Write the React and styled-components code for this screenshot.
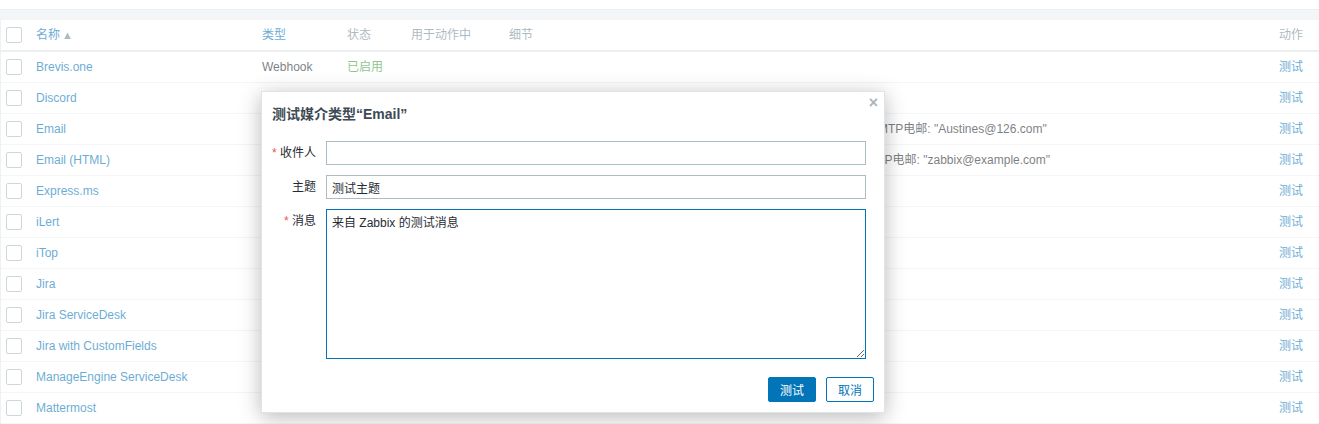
import React from "react";
import styled, { createGlobalStyle } from "styled-components";

const GlobalStyle = createGlobalStyle`
  html, body {
    margin: 0;
    padding: 0;
    background: #ffffff;
  }
  body {
    font-family: "Liberation Sans", Arial, "Noto Sans CJK SC", sans-serif;
    font-size: 12px;
    color: #1f2c33;
    overflow: hidden;
  }
`;

// rows below the dialog only show their name, details and the test link
const mediaTypes = [
  { name: "Brevis.one", type: "Webhook", status: "已启用", details: "" },
  { name: "Discord" },
  {
    name: "Email",
    details:
      'SMTP服务器: "smtp.126.com", SMTP HELO: "zabbix.mx.126.com", SMTP电邮: "Austines@126.com"',
  },
  {
    name: "Email (HTML)",
    details:
      'SMTP服务器: "mail.example.com", SMTP HELO: "example.com", SMTP电邮: "zabbix@example.com"',
  },
  { name: "Express.ms" },
  { name: "iLert" },
  { name: "iTop" },
  { name: "Jira" },
  { name: "Jira ServiceDesk" },
  { name: "Jira with CustomFields" },
  { name: "ManageEngine ServiceDesk" },
  { name: "Mattermost" },
];

function App() {
  return (
    <Page>
      <GlobalStyle />
      <TopBar />
      <Band />
      <Table>
        <HeaderRow>
          <CheckCell>
            <Checkbox />
          </CheckCell>
          <NameCell>
            <SortLink>名称</SortLink>
            <SortArrow>▲</SortArrow>
          </NameCell>
          <TypeCell>
            <HeaderLink>类型</HeaderLink>
          </TypeCell>
          <StatusCell $muted>状态</StatusCell>
          <ActionsUsedCell $muted>用于动作中</ActionsUsedCell>
          <DetailsCell $muted>细节</DetailsCell>
          <ActionCell $muted>动作</ActionCell>
        </HeaderRow>
        {mediaTypes.map((m) => (
          <Row key={m.name}>
            <CheckCell>
              <Checkbox />
            </CheckCell>
            <NameCell>
              <NameLink>{m.name}</NameLink>
            </NameCell>
            <TypeCell>{m.type}</TypeCell>
            <StatusCell>{m.status && <Enabled>{m.status}</Enabled>}</StatusCell>
            <ActionsUsedCell />
            <DetailsCell>{m.details}</DetailsCell>
            <ActionCell>
              <TestLink>测试</TestLink>
            </ActionCell>
          </Row>
        ))}
      </Table>

      <Overlay />

      <Dialog>
        <CloseButton>×</CloseButton>
        <DialogTitle>测试媒介类型“Email”</DialogTitle>
        <Form>
          <Label $required>收件人</Label>
          <TextInput defaultValue="" />
          <Label>主题</Label>
          <TextInput defaultValue="测试主题" />
          <Label $required>消息</Label>
          <TextArea defaultValue="来自 Zabbix 的测试消息" />
        </Form>
        <Footer>
          <Button $primary>测试</Button>
          <Button>取消</Button>
        </Footer>
      </Dialog>
    </Page>
  );
}

const Page = styled.div`
  position: relative;
  width: 1319px;
  height: 424px;
  overflow: hidden;
`;

const TopBar = styled.div`
  height: 9px;
  background: #ffffff;
  border-bottom: 1px solid #dfe4e7;
`;

const Band = styled.div`
  height: 10px;
  background: #ebeef0;
`;

const Table = styled.div`
  background: #ffffff;
  border-left: 1px solid #e3e7ea;
`;

const Row = styled.div`
  display: grid;
  grid-template-columns: 35px 226px 85px 64px 98px 1fr 80px;
  align-items: center;
  height: 30px;
  line-height: 14px;
  border-bottom: 1px solid #ebeef0;
  white-space: nowrap;
`;

const HeaderRow = styled(Row)`
  height: 30px;
  border-bottom: 2px solid #dfe4e7;
`;

const Cell = styled.div`
  overflow: hidden;
  color: ${(p) => (p.$muted ? "#768d99" : "#1f2c33")};
`;

const CheckCell = styled(Cell)`
  padding-left: 5px;
  display: flex;
  align-items: center;
`;

const NameCell = styled(Cell)`
  display: flex;
  align-items: center;
`;

const TypeCell = styled(Cell)``;
const StatusCell = styled(Cell)``;
const ActionsUsedCell = styled(Cell)``;
const DetailsCell = styled(Cell)`
  overflow: visible;
`;

const ActionCell = styled(Cell)`
  text-align: right;
  padding-right: 16px;
`;

const Checkbox = styled.span`
  display: block;
  width: 14px;
  height: 14px;
  border: 1px solid #acbbc4;
  border-radius: 2px;
  background: #ffffff;
`;

const NameLink = styled.span`
  color: #0275b8;
`;

const SortLink = styled.span`
  color: #0275b8;
`;

const SortArrow = styled.span`
  color: #768d99;
  font-size: 11px;
  margin-left: 2px;
`;

const HeaderLink = styled.span`
  color: #0275b8;
  border-bottom: 1px solid #0275b8;
`;

const Enabled = styled.span`
  color: #429e47;
  border-bottom: 1px dotted #429e47;
`;

const TestLink = styled.span`
  color: #0275b8;
  border-bottom: 1px dotted #0275b8;
`;

const Overlay = styled.div`
  position: absolute;
  inset: 0;
  background: rgba(255, 255, 255, 0.4);
`;

const Dialog = styled.div`
  position: absolute;
  left: 261px;
  top: 91px;
  width: 602px;
  height: 310px;
  padding: 0 10px 10px 10px;
  background: #ffffff;
  border: 1px solid #dfe4e7;
  box-shadow: 0 4px 20px rgba(0, 0, 0, 0.28);
  display: flex;
  flex-direction: column;
`;

const CloseButton = styled.span`
  position: absolute;
  top: 3px;
  right: 6px;
  color: #aab5bb;
  font-size: 16px;
  font-weight: bold;
  line-height: 16px;
`;

const DialogTitle = styled.h4`
  margin: 0;
  padding: 13px 0 18px 0;
  font-size: 14px;
  line-height: 18px;
  font-weight: bold;
  color: #3e4a54;
`;

const Form = styled.div`
  display: grid;
  grid-template-columns: 44px 540px;
  column-gap: 10px;
  row-gap: 10px;
  align-items: start;
`;

const Label = styled.label`
  text-align: right;
  line-height: 24px;
  color: #1f2c33;
  white-space: nowrap;

  &::before {
    content: ${(p) => (p.$required ? '"* "' : '""')};
    color: #e45959;
  }
`;

const TextInput = styled.input`
  box-sizing: border-box;
  width: 540px;
  height: 24px;
  margin: 0;
  padding: 0 5px;
  border: 1px solid #acbbc4;
  border-radius: 0;
  font: inherit;
  color: #1f2c33;
  outline: none;
`;

const TextArea = styled.textarea`
  box-sizing: border-box;
  width: 540px;
  height: 150px;
  margin: 0;
  padding: 5px 5px;
  border: 1px solid #0275b8;
  border-radius: 0;
  font: inherit;
  line-height: 16px;
  color: #1f2c33;
  outline: none;
`;

const Footer = styled.div`
  margin-top: auto;
  display: flex;
  justify-content: flex-end;
  gap: 10px;
`;

const Button = styled.button`
  box-sizing: border-box;
  height: 25px;
  padding: 0 11px;
  border: 1px solid #0275b8;
  border-radius: 2px;
  background: ${(p) => (p.$primary ? "#0275b8" : "#ffffff")};
  color: ${(p) => (p.$primary ? "#ffffff" : "#0275b8")};
  font: inherit;
`;

export default App;
